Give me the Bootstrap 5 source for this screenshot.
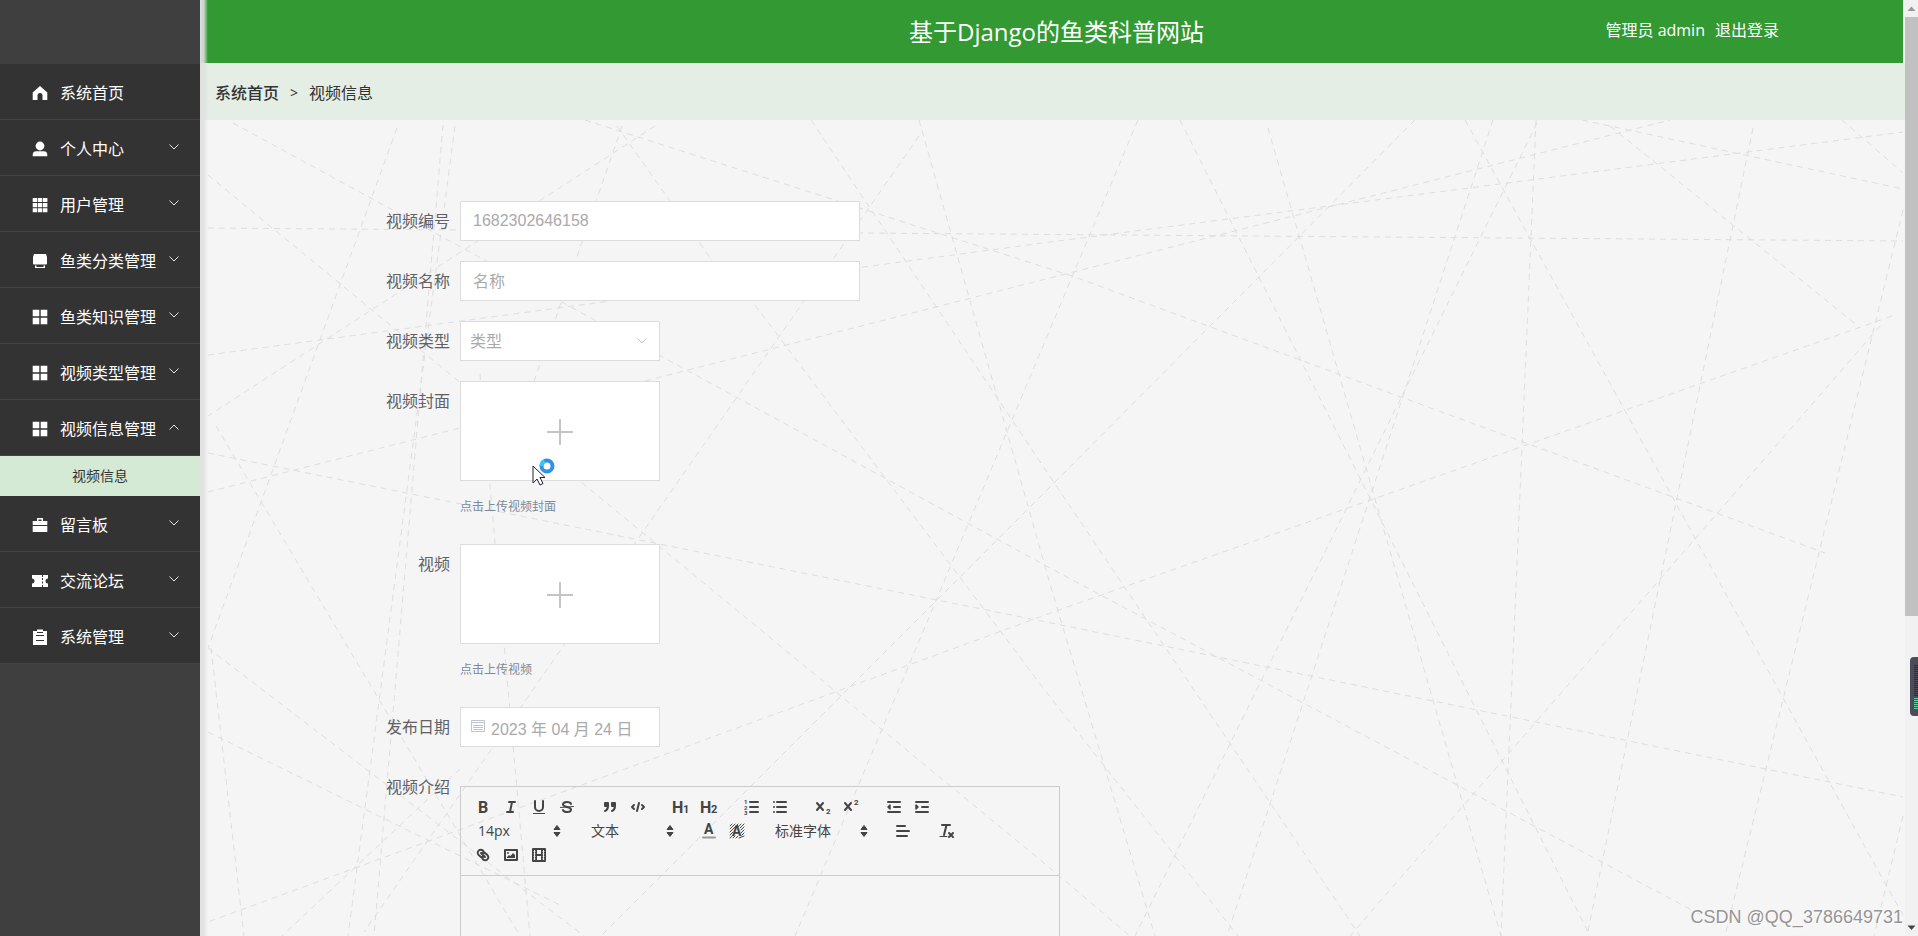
<!DOCTYPE html>
<html lang="zh-CN">
<head>
<meta charset="utf-8">
<meta name="viewport" content="width=device-width, initial-scale=1">
<title>基于Django的鱼类科普网站</title>
<link rel="stylesheet" href="https://cdn.jsdelivr.net/npm/bootstrap@5.3.0/dist/css/bootstrap.min.css">
<style>
  body { font-family: "Open Sans", "Noto Sans CJK SC", sans-serif; font-size: 16px; color: #333; background: #f5f5f5; }
  button, input, select { font-family: "Liberation Sans", "Noto Sans CJK SC", sans-serif; }
  .sidebar { width: 200px; background: #3f3f3f; z-index: 2; }
  .sidebar::after { content: ""; position: absolute; top: 0; bottom: 0; left: 100%; width: 8px; background: linear-gradient(to right, #e0e0e0, rgba(224,224,224,.85) 50%, rgba(224,224,224,0)); }
  .logo-space { height: 64px; }
  .menu-link { height: 56px; padding: 2px 20px 0 32px; background: #333; color: #fff; border-bottom: 1px solid #444; text-decoration: none; }
  .menu-link .ico { width: 16px; height: 16px; margin-right: 12px; fill: #fff; flex: none; }
  .menu-link .arrow { width: 12px; height: 12px; fill: none; stroke: #e4e4e4; margin: 0 0 4px auto; flex: none; }
  .sub-link { height: 40px; padding-bottom: 2px; background: #d5ead5; color: #333; font-size: 14px; text-decoration: none; }
  .topbar { height: 63px; background: #339933; color: #fff; margin-right: 2px; }
  .site-title { font-size: 24px; line-height: 36px; margin: 0 0 0 10px; }
  .user-box { padding: 0 124px 4px 0; gap: 10px; }
  .crumbs { height: 57px; background: #e4eee4; padding: 2px 15px 0; gap: 11px; }
  .crumbs a { color: #333; font-weight: 500; text-decoration: none; }
  .crumbs .sep { font-size: 14px; }
  .lines { inset: 0; width: 100%; height: 100%; stroke: #dedede; stroke-width: 1; stroke-dasharray: 6 5; fill: none; }
  .video-form { padding: 81px 24px 0 180px; }
  .form-line { margin-bottom: 20px; }
  .form-line label { width: 80px; padding-right: 10px; line-height: 40px; color: #606266; text-align: right; flex: none; }
  .field { height: 40px; border: 1px solid #ddd; background: #fff; color: #aaa; border-radius: 0; font-size: 16px; padding: 0 12px; }
  .field::placeholder { color: #aaa; opacity: 1; }
  .w-long { width: 400px; } .w-short { width: 200px; }
  .cjk-field { padding-top: 2px; }
  select.field { appearance: none; padding: 2px 9px 0; }
  .field-arrow { right: 12px; top: 14px; width: 12px; height: 12px; }
  .field-cal { left: 10px; top: 11px; width: 16px; height: 16px; }
  .date-field { padding-left: 30px; }
  .upload { width: 200px; height: 100px; border: 1px solid #ddd; background: #fff; padding: 2px 0 0; display: block; }
  .tip { font-size: 12px; line-height: 18px; color: #7d8a99; margin: 17px 0 28px; }
  .busy-cursor { left: 72px; top: 73px; width: 26px; height: 32px; pointer-events: none; }
  .editor { width: 600px; margin-top: 19px; border: 1px solid #ccc; border-bottom: 0; }
  .tools { padding: 8px; border-bottom: 1px solid #ccc; }
  .tool-row { gap: 15px; }
  .tool { width: 28px; height: 24px; padding: 3px 5px; border: 0; background: none; display: block; }
  .tool svg { width: 18px; height: 18px; display: block; fill: none; stroke: #444; stroke-width: 2; stroke-linecap: round; stroke-linejoin: round; }
  .tool text { fill: #444; stroke: none; font-family: Roboto, sans-serif; font-weight: 700; }
  .tool .solid { fill: #444; } .tool .fine { stroke-width: 1; }
  .picker { height: 24px; border: 0; background: none; padding: 0 20px 0 9px; color: #444; font-family: "Open Sans", "Noto Sans CJK SC", sans-serif; font-size: 14px; line-height: 22px; text-align: left; }
  .picker svg { right: 1px; top: 3px; width: 18px; height: 18px; fill: #444; }
  .pick-a { width: 98px; } .pick-b { width: 108px; }
  .editing { height: 300px; }
  .scroller { width: 13px; background: #f1f1f1; z-index: 3; }
  .scroller svg { width: 13px; height: 17px; display: block; }
  .thumb { height: 64%; background: #c1c1c1; }
  .meter { right: 0; top: 657px; width: 8px; height: 59px; background: #4c4c58; border-radius: 4px 0 0 4px; z-index: 4; }
  .meter svg { width: 8px; height: 59px; display: block; }
  .watermark { right: 15px; bottom: 5px; font: 18px/28px "Liberation Sans", sans-serif; color: #959595; text-shadow: 1px 1px 0 #fff; z-index: 4; }
</style>
<script src="https://cdn.jsdelivr.net/npm/bootstrap@5.3.0/dist/js/bootstrap.bundle.min.js"></script>
</head>
<body>
<svg class="d-none">
  <symbol id="down" viewBox="0 0 12 12"><path d="M1.500 3.500 6 8 10.500 3.500"/></symbol>
  <symbol id="up" viewBox="0 0 12 12"><path d="M1.500 8.500 6 4 10.500 8.500"/></symbol>
  <symbol id="tiles" viewBox="0 0 16 16"><path d="M.7.7h6.600v6.600H.7zM8.700.7h6.600v6.600H8.700zM.7 8.700h6.600v6.600H.7zM8.700 8.700h6.600v6.600H8.700z"/></symbol>
  <symbol id="sort" viewBox="0 0 18 18"><path d="M9 3.500 12 7.500H6zM9 14.500 12 10.500H6z" stroke="#444" stroke-linejoin="round"/></symbol>
</svg>
<div class="d-flex vh-100 overflow-hidden position-relative">
  <nav class="sidebar position-relative flex-shrink-0" aria-label="主菜单">
    <div class="logo-space"></div>
    <a class="menu-link d-flex align-items-center" href="#"><svg class="ico" viewBox="0 0 16 16"><path d="M8 1 15.300 7.500V15H10.500V10.500a2.500 2.500 0 0 0-5 0V15H.7V7.500z"/></svg>系统首页</a>
    <a class="menu-link d-flex align-items-center" href="#"><svg class="ico" viewBox="0 0 16 16"><circle cx="8" cy="5" r="4.400"/><path d="M.7 15.300v-1.500q0-3.500 3.500-3.500h7.600q3.500 0 3.500 3.500v1.500z"/></svg>个人中心<svg class="arrow"><use href="#down"/></svg></a>
    <a class="menu-link d-flex align-items-center" href="#"><svg class="ico" viewBox="0 0 16 16"><path d="M.7 1h4.500v4H.7zM5.900 1h4.300v4H5.900zM10.900 1h4.500v4h-4.500zM.7 6h4.500v4.300H.7zM5.900 6h4.300v4.300H5.900zM10.900 6h4.500v4.300h-4.500zM.7 11.200h4.500v4H.7zM5.900 11.200h4.300v4H5.900zM10.900 11.200h4.500v4h-4.500z"/></svg>用户管理<svg class="arrow"><use href="#down"/></svg></a>
    <a class="menu-link d-flex align-items-center" href="#"><svg class="ico" viewBox="0 0 16 16"><path d="M2 1h12l1 3v6.500a1 1 0 0 1-1 1H2a1 1 0 0 1-1-1V4zM3 12.500h1.500V14h7v-1.500H13V15H3z"/></svg>鱼类分类管理<svg class="arrow"><use href="#down"/></svg></a>
    <a class="menu-link d-flex align-items-center" href="#"><svg class="ico"><use href="#tiles"/></svg>鱼类知识管理<svg class="arrow"><use href="#down"/></svg></a>
    <a class="menu-link d-flex align-items-center" href="#"><svg class="ico"><use href="#tiles"/></svg>视频类型管理<svg class="arrow"><use href="#down"/></svg></a>
    <a class="menu-link d-flex align-items-center" href="#"><svg class="ico"><use href="#tiles"/></svg>视频信息管理<svg class="arrow"><use href="#up"/></svg></a>
    <a class="sub-link d-flex align-items-center justify-content-center" href="#">视频信息</a>
    <a class="menu-link d-flex align-items-center" href="#"><svg class="ico" viewBox="0 0 16 16"><path d="M.7 4H5V1h6v3h4.300v4H.7zM6.500 2.500V4h3V2.500zM.7 9h14.600v6H.7z" fill-rule="evenodd"/></svg>留言板<svg class="arrow"><use href="#down"/></svg></a>
    <a class="menu-link d-flex align-items-center" href="#"><svg class="ico" viewBox="0 0 16 16"><path d="M0 2h10v2h1V2h5v3.500a2.500 2.500 0 0 0 0 5V14h-5v-2h-1v2H0v-3.500a2.500 2.500 0 0 0 0-5zM10 5v2h1V5zM10 8.500v2h1v-2z" fill-rule="evenodd"/></svg>交流论坛<svg class="arrow"><use href="#down"/></svg></a>
    <a class="menu-link d-flex align-items-center" href="#"><svg class="ico" viewBox="0 0 16 16"><path d="M1 2H5V.5h6V2h4v14H1zM4 6v1h8V6zM4 11v1h8v-1zM5 3v1h6V3z" fill-rule="evenodd"/></svg>系统管理<svg class="arrow"><use href="#down"/></svg></a>
  </nav>

  <div class="d-flex flex-column flex-grow-1">
    <header class="topbar d-flex align-items-center flex-shrink-0">
      <div class="flex-fill w-25"></div>
      <h1 class="site-title fw-normal text-nowrap">基于Django的鱼类科普网站</h1>
      <div class="user-box flex-fill w-25 d-flex justify-content-end"><span>管理员 admin</span><a class="text-white text-decoration-none" href="#">退出登录</a></div>
    </header>
    <nav class="crumbs d-flex align-items-center flex-shrink-0" aria-label="面包屑"><a href="#">系统首页</a><span class="sep">&gt;</span><span>视频信息</span></nav>

    <main class="position-relative flex-grow-1 overflow-hidden">
      <svg class="lines position-absolute" viewBox="200 120 1705 816" preserveAspectRatio="xMinYMin slice" aria-hidden="true">
        <path d="M1138 120 785 960M1180 120 1590 936M1268 128 1501 936M1415 120 1050 487 601 936M1465 120 1886 885 1915 936M1493 120 1227 936M1537 123 1135 936M1536 120 1501 936"/>
        <path d="M208 228 1903 241M208 492 1050 278 1670 120M208 355 1050 242 1903 132M585 120 1072 276 1825 553M1892 316 1056 611 208 922M1880 326 1350 936M1753 128 1587 936M1903 210 1725 936"/>
        <path d="M1582 120 1903 189M1610 126 1858 326M1842 120 1903 173M208 453 1066 626 1903 797M233 123 1050 568 1703 916M811 120 1055 484 1360 936M755 305 1050 697 1238 936M919 120 1050 584 1155 936M1903 816 1874 936"/>
        <path d="M208 175 1050 868 1130 936M397 128 208 648M443 125 374 936M455 126 348 936M655 126 208 416M622 126 500 480M919 136 364 932M216 426 520 936M208 648 584 936M211 648 244 936M208 732 560 905M480 374 530 936M617 126 740 300M460 769 282 936"/>
      </svg>
      <form class="video-form position-relative">
        <div class="form-line d-flex"><label for="no">视频编号</label><input class="field w-long" id="no" type="text" value="1682302646158" readonly></div>
        <div class="form-line d-flex"><label for="name">视频名称</label><input class="field cjk-field w-long" id="name" type="text" placeholder="名称"></div>
        <div class="form-line d-flex"><label for="kind">视频类型</label>
          <div class="position-relative"><select class="field w-short" id="kind"><option>类型</option></select><svg class="field-arrow position-absolute" fill="none" stroke="#c0c4cc"><use href="#down"/></svg></div></div>
        <div class="form-line d-flex mb-0"><label for="cover">视频封面</label>
          <div class="position-relative">
            <button class="upload" id="cover" type="button"><svg width="28" height="28" stroke="#c4c4c8" stroke-width="2"><path d="M14 1v26M1 14h26"/></svg></button>
            <p class="tip">点击上传视频封面</p>
            <svg class="busy-cursor position-absolute" viewBox="0 0 26 32"><circle cx="15" cy="12" r="5.500" fill="#fff" stroke="#2f92e6" stroke-width="4"/><path d="M9.500 12a5.500 5.500 0 0 1 3-5" fill="none" stroke="#3cc4f5" stroke-width="4"/><path d="M1 12v17l4-4 3 6 3-1.500-3-6h5z" fill="#fff" stroke="#223" stroke-width="1"/></svg>
          </div></div>
        <div class="form-line d-flex mb-0"><label for="clip">视频</label>
          <div><button class="upload" id="clip" type="button"><svg width="28" height="28" stroke="#c4c4c8" stroke-width="2"><path d="M14 1v26M1 14h26"/></svg></button>
            <p class="tip">点击上传视频</p></div></div>
        <div class="form-line d-flex"><label for="day">发布日期</label>
          <div class="position-relative"><input class="field cjk-field date-field w-short" id="day" type="text" value="2023 年 04 月 24 日" readonly><svg class="field-cal position-absolute" viewBox="0 0 16 16" fill="none" stroke="#c0c4cc"><path d="M1.500 2.500h13v11h-13zM1.500 4.500h13M3 7.500h10M3 9.500h10M3 11.500h10"/></svg></div></div>
        <div class="d-flex form-line"><label for="intro">视频介绍</label>
          <div class="editor">
            <div class="tools" role="toolbar">
              <div class="tool-row d-flex">
                <div class="d-flex">
                  <button class="tool" type="button" aria-label="粗体"><svg viewBox="0 0 18 18"><text x="4" y="15" font-size="16">B</text></svg></button>
                  <button class="tool" type="button" aria-label="斜体"><svg viewBox="0 0 18 18"><path d="M7 4h6M5 14h6M8 14 10 4"/></svg></button>
                  <button class="tool" type="button" aria-label="下划线"><svg viewBox="0 0 18 18"><path d="M5 3v6a4 4 0 0 0 8 0V3"/><path class="fine" d="M3.500 15.500h11"/></svg></button>
                  <button class="tool" type="button" aria-label="删除线"><svg viewBox="0 0 18 18"><path class="fine" d="M15.500 8.500 2.500 9.500"/><path d="M13 6C12.500 3.500 5 3 5 6.500 5 9.500 13 8.500 13 11.500 13 15 5.500 14.500 5 12"/></svg></button>
                </div>
                <div class="d-flex">
                  <button class="tool" type="button" aria-label="引用"><svg viewBox="0 0 18 18"><path class="solid" d="M4 5h3v3H4zM11 5h3v3h-3zM7 8c0 4-3 5-3 5M14 8c0 4-3 5-3 5"/></svg></button>
                  <button class="tool" type="button" aria-label="代码"><svg viewBox="0 0 18 18"><path d="M5 7 3 9 5 11M13 7 15 9 13 11M10 5 8 13"/></svg></button>
                </div>
                <div class="d-flex">
                  <button class="tool" type="button" aria-label="标题一"><svg viewBox="0 0 18 18"><text x="0" y="15" font-size="16">H</text><text x="11" y="15" font-size="11">1</text></svg></button>
                  <button class="tool" type="button" aria-label="标题二"><svg viewBox="0 0 18 18"><text x="0" y="15" font-size="16">H</text><text x="11" y="15" font-size="11">2</text></svg></button>
                </div>
                <div class="d-flex">
                  <button class="tool" type="button" aria-label="有序列表"><svg viewBox="0 0 18 18"><path d="M7 4h8M7 9h8M7 14h8"/><text x="1" y="6" font-size="6">1</text><text x="1" y="12" font-size="6">2</text><text x="1" y="17" font-size="6">3</text></svg></button>
                  <button class="tool" type="button" aria-label="无序列表"><svg viewBox="0 0 18 18"><path d="M6 4h9M6 9h9M6 14h9M3 4h0M3 9h0M3 14h0"/></svg></button>
                </div>
                <div class="d-flex">
                  <button class="tool" type="button" aria-label="下标"><svg viewBox="0 0 18 18"><path d="M3 5 9 12M9 5 3 12"/><text x="12" y="16" font-size="8">2</text></svg></button>
                  <button class="tool" type="button" aria-label="上标"><svg viewBox="0 0 18 18"><path d="M3 5 9 12M9 5 3 12"/><text x="12" y="7" font-size="8">2</text></svg></button>
                </div>
                <div class="d-flex">
                  <button class="tool" type="button" aria-label="减少缩进"><svg viewBox="0 0 18 18"><path d="M3 4h12M3 14h12M9 9h6"/><path class="solid" stroke-width="1.500" d="M5 7v4L3 9z"/></svg></button>
                  <button class="tool" type="button" aria-label="增加缩进"><svg viewBox="0 0 18 18"><path d="M3 4h12M3 14h12M9 9h6"/><path class="solid" stroke-width="1.500" d="M3 7v4l2-2z"/></svg></button>
                </div>
              </div>
              <div class="tool-row d-flex">
                <button class="picker pick-a position-relative" type="button">14px<svg class="position-absolute"><use href="#sort"/></svg></button>
                <button class="picker pick-a position-relative" type="button">文本<svg class="position-absolute"><use href="#sort"/></svg></button>
                <div class="d-flex">
                  <button class="tool" type="button" aria-label="文字颜色"><svg viewBox="0 0 18 18"><text x="4" y="12" font-size="14">A</text><path stroke="#999" d="M3 15.500h12"/></svg></button>
                  <button class="tool" type="button" aria-label="背景颜色"><svg viewBox="0 0 18 18"><path class="fine" d="M2 4 4 2M2 7 7 2M2 10 10 2M2 13 5 10M10 5 13 2M2 16 5 13M12 6 16 2M13 8 16 5M13 11 16 8M14 13 16 11M5 16 7 14M8 16 10 14M11 16 16 14"/><text x="4" y="14" font-size="14">A</text></svg></button>
                </div>
                <button class="picker pick-b position-relative" type="button">标准字体<svg class="position-absolute"><use href="#sort"/></svg></button>
                <button class="tool" type="button" aria-label="对齐"><svg viewBox="0 0 18 18"><path d="M3 4h8M3 9h12M3 14h10"/></svg></button>
                <button class="tool" type="button" aria-label="清除格式"><svg viewBox="0 0 18 18"><path d="M5 3h8M9.500 3 7 13M12 11l4 4M16 11l-4 4"/><path class="fine" d="M3 14.500h7"/></svg></button>
              </div>
              <div class="tool-row d-flex">
                <div class="d-flex">
                  <button class="tool" type="button" aria-label="链接"><svg viewBox="0 0 18 18"><path d="M7 7 11 11"/><path d="M8.900 4.600a3 3 0 0 0-4.300 0 3 3 0 0 0 0 4.300L7 11a3 3 0 0 0 3-.5M8.900 4.600 10.500 7M9.100 13.400a3 3 0 0 0 4.300 0 3 3 0 0 0 0-4.300L11 7a3 3 0 0 0-3 .5M9.100 13.400 7.500 11"/></svg></button>
                  <button class="tool" type="button" aria-label="图片"><svg viewBox="0 0 18 18"><path d="M3 4h12v10H3z"/><circle class="solid" cx="6" cy="7" r="1" stroke="none"/><path class="solid" stroke="none" d="M5 12v-1l2-2 1.500 1L11 7l2 2v3z"/></svg></button>
                  <button class="tool" type="button" aria-label="视频"><svg viewBox="0 0 18 18"><path d="M3 3h12v12H3zM6 3v12M12 3v12M6 9h6"/><path class="fine" stroke="#f5f5f5" d="M4 5.500h1M4 8h1M4 10.500h1M4 13h1M13 5.500h1M13 8h1M13 10.500h1M13 13h1"/></svg></button>
                </div>
              </div>
            </div>
            <div class="editing" id="intro" contenteditable="true" role="textbox" aria-label="视频介绍"></div>
          </div>
        </div>
      </form>
    </main>
  </div>

  <div class="scroller d-flex flex-column flex-shrink-0" aria-hidden="true">
    <svg viewBox="0 0 13 17"><path d="M2.500 11 6.500 6.500 10.500 11z" fill="#999"/></svg>
    <div class="thumb"></div>
    <svg class="mt-auto" viewBox="0 0 13 17"><path d="M2.500 6.500 6.500 11 10.500 6.500z" fill="#444"/></svg>
  </div>
  <div class="meter position-absolute" aria-hidden="true"><svg viewBox="0 0 8 59"><path d="M6 8v32" stroke="#2c2c3a" stroke-width="4" stroke-dasharray="1 1"/><path d="M6 41v12" stroke="#5fd0a0" stroke-width="4" stroke-dasharray="1 1"/></svg></div>
  <div class="watermark position-absolute">CSDN @QQ_3786649731</div>
</div>
</body>
</html>
